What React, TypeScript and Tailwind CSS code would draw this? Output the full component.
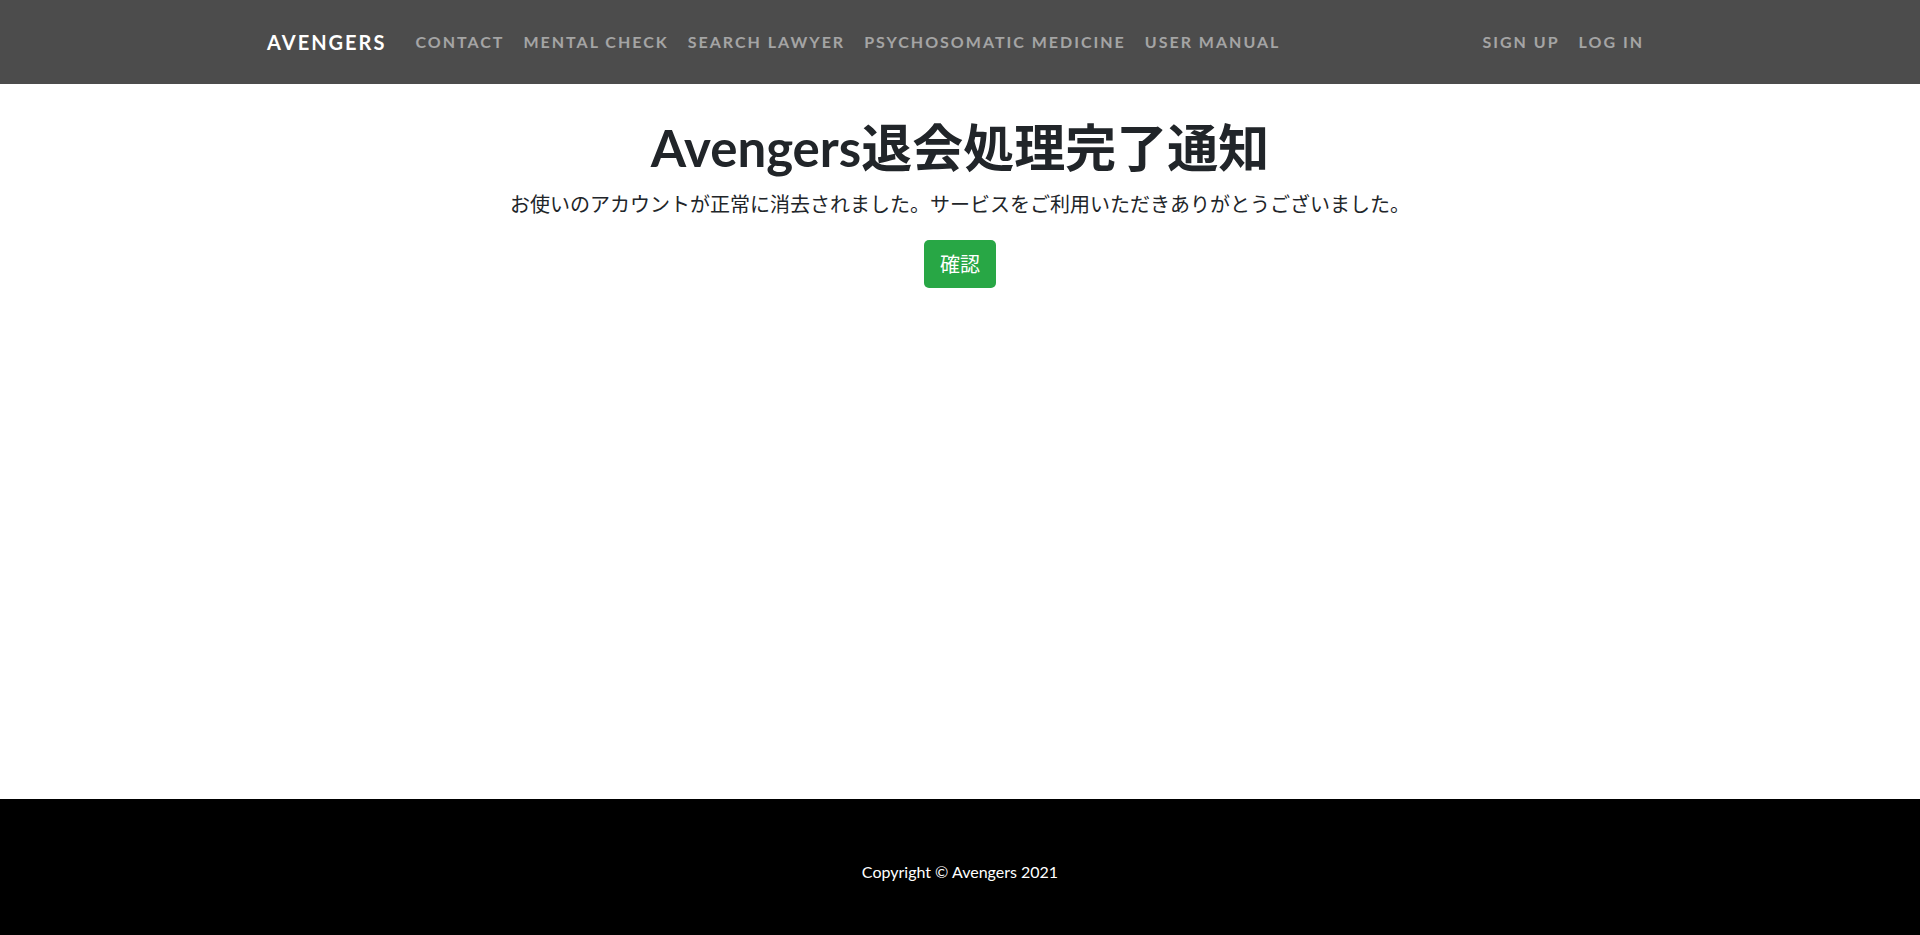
const leftLinks = ['Contact', 'Mental Check', 'Search Lawyer', 'Psychosomatic Medicine', 'User Manual'];
const rightLinks = ['Sign Up', 'Log In'];

function NavLink({ label }: { label: string }) {
  return (
    <li>
      <a href="#" className="text-white/50 text-[16px] font-bold tracking-[2px] uppercase">
        {label}
      </a>
    </li>
  );
}

export default function App() {
  return (
    <div className="min-h-screen flex flex-col bg-white font-['Lato','Noto_Sans_CJK_JP',sans-serif] text-[#212529]">
      <nav className="h-[84px] bg-[#4c4c4c] flex items-center">
        <div className="w-[1386px] mx-auto flex items-center">
          <a href="#" className="text-white text-[20px] font-bold tracking-[2px] uppercase">
            Avengers
          </a>
          <ul className="flex items-center gap-[19px] ml-[29px]">
            {leftLinks.map((l) => (
              <NavLink key={l} label={l} />
            ))}
          </ul>
          <ul className="flex items-center gap-[19px] ml-auto pr-[9px]">
            {rightLinks.map((l) => (
              <NavLink key={l} label={l} />
            ))}
          </ul>
        </div>
      </nav>

      <main className="flex-1 flex flex-col items-center pt-[33px]">
        <h1 className="text-[51px] leading-[1.2] font-bold">Avengers退会処理完了通知</h1>
        <p className="mt-[11px] text-[20px] leading-[1.5]">
          お使いのアカウントが正常に消去されました。サービスをご利用いただきありがとうございました。
        </p>
        <button className="mt-[21px] h-[48px] px-4 rounded-[5px] bg-[#28a745] text-white text-[20px]">
          確認
        </button>
      </main>

      <footer className="h-[136px] bg-black flex items-center justify-center">
        <p className="text-white text-[16px] leading-[1.5] mt-[10px]">Copyright © Avengers 2021</p>
      </footer>
    </div>
  );
}
